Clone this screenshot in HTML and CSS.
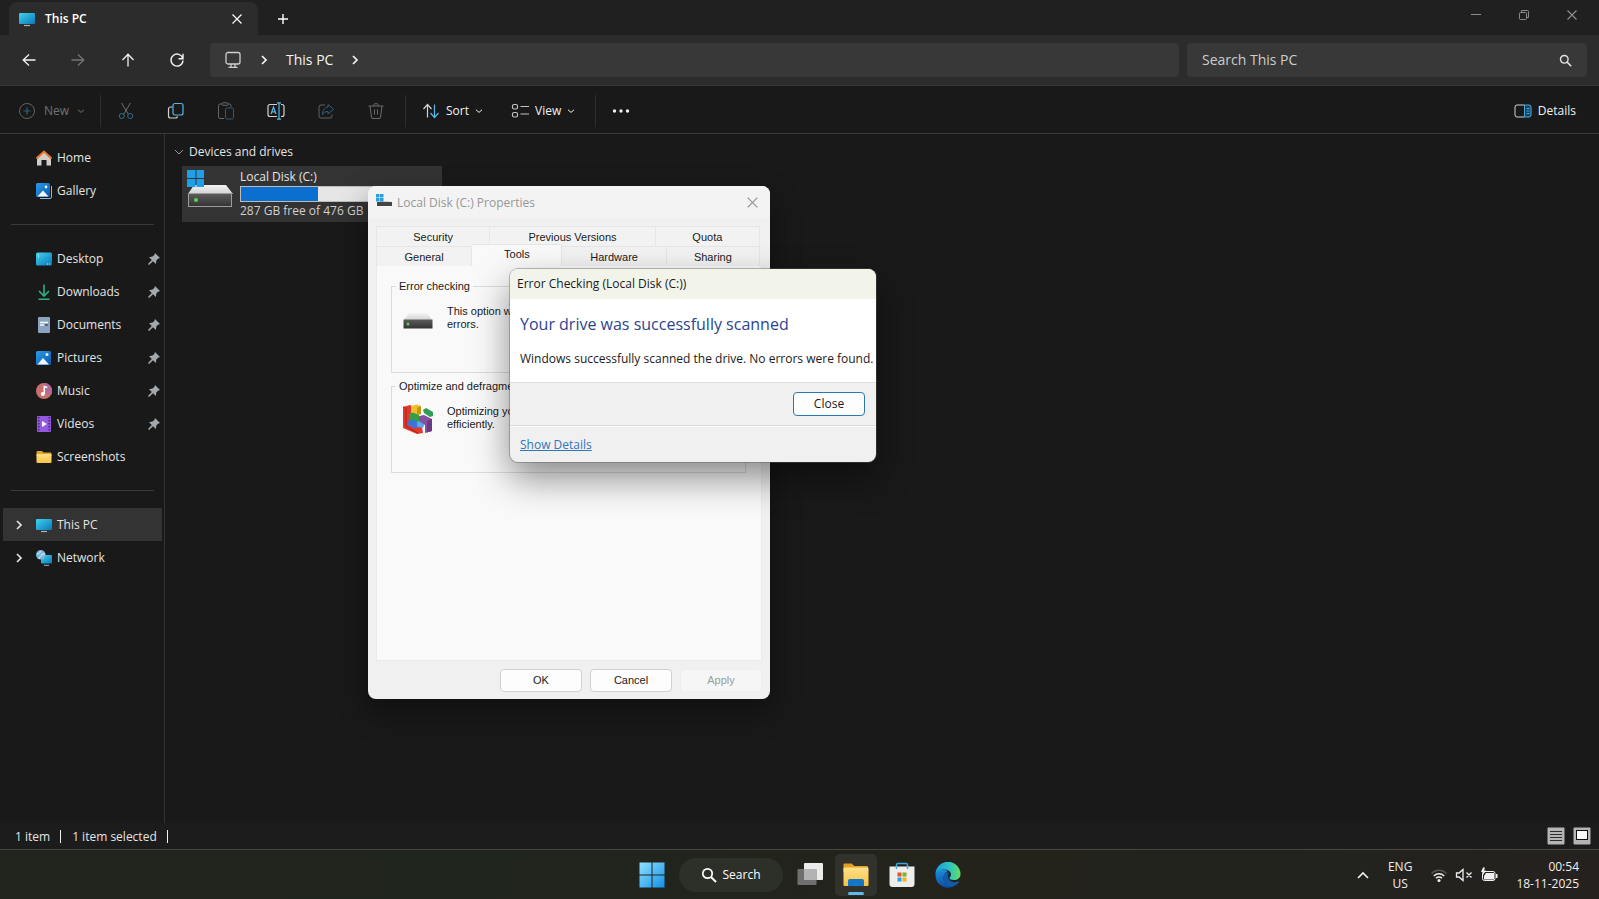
FILE: index.html
```html
<!DOCTYPE html>
<html lang="en">
<head>
  <meta charset="UTF-8">
  <title>This PC</title>
  <link rel="stylesheet" href="styles.css">
</head>
<body>
  <!-- shared icons -->
  <svg class="defs" width="0" height="0">
    <defs>
      <linearGradient id="screen" x1="0" y1="0" x2="1" y2="1">
        <stop offset="0" stop-color="#3fd3ee"/><stop offset="1" stop-color="#0a78b8"/>
      </linearGradient>
      <linearGradient id="blue" x1="0" y1="0" x2="1" y2="1">
        <stop offset="0" stop-color="#2a9be8"/><stop offset="1" stop-color="#0b58ae"/>
      </linearGradient>
      <linearGradient id="folder" x1="0" y1="0" x2="0" y2="1">
        <stop offset="0" stop-color="#ffe08a"/><stop offset="1" stop-color="#f8c243"/>
      </linearGradient>
      <linearGradient id="drivetop" x1="0" y1="0" x2="0" y2="1">
        <stop offset="0" stop-color="#f4f4f4"/><stop offset="1" stop-color="#d2d2d2"/>
      </linearGradient>
      <linearGradient id="drivebody" x1="0" y1="0" x2="0" y2="1">
        <stop offset="0" stop-color="#5c5c5c"/><stop offset="1" stop-color="#333"/>
      </linearGradient>
      <linearGradient id="start" x1="0" y1="0" x2="1" y2="1">
        <stop offset="0" stop-color="#8fe2ff"/><stop offset="1" stop-color="#1290e8"/>
      </linearGradient>
      <symbol id="pc" viewBox="0 0 16 16">
        <rect x="0" y="2" width="16" height="11" rx="1" fill="url(#screen)"/>
        <path d="M5 14.500h6" stroke="#a9b4bb" stroke-width="1.200"/>
      </symbol>
      <symbol id="picture" viewBox="0 0 16 16">
        <rect x="0" y="1" width="15" height="14" rx="1.500" fill="url(#blue)"/>
        <path d="M1.500 14.500L7 8l6 6.500z" fill="#eef8ff"/>
        <circle cx="11" cy="4.500" r="1.500" fill="#e6f5ff"/>
      </symbol>
      <symbol id="pin" viewBox="0 0 12 12">
        <path d="M7 0L12 5l-2 0.700-1.700 1.800-0.400 3.500L5 8.200 1 12 0 11 3.800 7 1 4.200l3.500-0.600L6.300 2z" fill="#a3a9ad"/>
      </symbol>
      <symbol id="down" viewBox="0 0 8 8">
        <path d="M1 2.800L4 5.400l3-2.600" fill="none" stroke="currentColor"/>
      </symbol>
      <symbol id="right" viewBox="0 0 8 12">
        <path d="M2 2l4 4-4 4" fill="none" stroke="currentColor" stroke-width="1.700"/>
      </symbol>
      <symbol id="close" viewBox="0 0 12 12">
        <path d="M1.500 1.500l9 9M10.500 1.500l-9 9" fill="none" stroke="currentColor" stroke-width="1.200"/>
      </symbol>
      <symbol id="search" viewBox="0 0 16 16">
        <circle cx="6.500" cy="6.500" r="4.700" fill="none" stroke="currentColor" stroke-width="1.700"/>
        <path d="M10 10l5 5" stroke="currentColor" stroke-width="1.900"/>
      </symbol>
      <symbol id="drive" viewBox="0 0 30 18">
        <path d="M6 1h18l5 7H1z" fill="url(#drivetop)"/>
        <rect x="0.500" y="7.500" width="29" height="9" fill="url(#drivebody)"/>
        <circle cx="5" cy="12" r="1.500" fill="#5ad15a"/>
      </symbol>
    </defs>
  </svg>

  <div class="desktop">
    <main class="explorer">
      <header class="titlebar">
        <div class="tab">
          <svg width="16" height="16"><use href="#pc"/></svg>
          <span class="tab-title">This PC</span>
          <button class="icon-btn tab-close" aria-label="Close tab"><svg width="12" height="12"><use href="#close"/></svg></button>
        </div>
        <button class="icon-btn new-tab" aria-label="New tab">
          <svg width="12" height="12" viewBox="0 0 12 12"><path d="M6 1v10M1 6h10" stroke="currentColor" stroke-width="1.400"/></svg>
        </button>
        <div class="window-controls">
          <button class="icon-btn" aria-label="Minimize"><svg width="12" height="12" viewBox="0 0 12 12"><path d="M1 5.500h10" stroke="currentColor"/></svg></button>
          <button class="icon-btn" aria-label="Restore"><svg width="12" height="12" viewBox="0 0 12 12" fill="none" stroke="currentColor"><rect x="1.500" y="3.500" width="7" height="7" rx="1"/><path d="M3.500 3V1.500h6a1 1 0 0 1 1 1v6H9"/></svg></button>
          <button class="icon-btn" aria-label="Close"><svg width="12" height="12"><use href="#close"/></svg></button>
        </div>
      </header>

      <nav class="address-row">
        <div class="nav-buttons">
          <button class="icon-btn" aria-label="Back"><svg width="16" height="16" viewBox="0 0 16 16" fill="none" stroke="currentColor" stroke-width="1.300"><path d="M14.500 8h-12M8 2.500L2.200 8 8 13.500"/></svg></button>
          <button class="icon-btn" aria-label="Forward" disabled><svg width="16" height="16" viewBox="0 0 16 16" fill="none" stroke="currentColor" stroke-width="1.300"><path d="M1.500 8h12M8 2.500L13.800 8 8 13.500"/></svg></button>
          <button class="icon-btn" aria-label="Up"><svg width="16" height="16" viewBox="0 0 16 16" fill="none" stroke="currentColor" stroke-width="1.300"><path d="M8 14.500v-12M2.500 8L8 2.200 13.500 8"/></svg></button>
          <button class="icon-btn" aria-label="Refresh"><svg width="16" height="16" viewBox="0 0 16 16" fill="none" stroke="currentColor" stroke-width="1.400"><path d="M13.800 6.500A6 6 0 1 0 14 8.500M14 1.800v5H9.500"/></svg></button>
        </div>
        <div class="address">
          <svg width="18" height="18" viewBox="0 0 18 18" fill="none" stroke="#cfcfcf" stroke-width="1.300"><rect x="2" y="1.500" width="14" height="11.500" rx="2"/><path d="M7 13v3M11 13v3M4.500 16.300h9"/></svg>
          <svg width="8" height="12"><use href="#right"/></svg>
          <button class="crumb">This PC</button>
          <svg width="8" height="12"><use href="#right"/></svg>
        </div>
        <div class="search-box">
          <input type="text" placeholder="Search This PC" aria-label="Search This PC">
          <svg width="13" height="13"><use href="#search"/></svg>
        </div>
      </nav>

      <div class="toolbar">
        <button class="tool new" disabled>
          <svg width="18" height="18" viewBox="0 0 18 18" fill="none"><circle cx="9" cy="9" r="7.500" stroke="#626262"/><path d="M9 5.500v7M5.500 9h7" stroke="#2f617c" stroke-width="1.200"/></svg>
          New <svg width="8" height="8"><use href="#down"/></svg>
        </button>
        <div class="tool-icons">
          <button class="icon-btn" aria-label="Cut" disabled><svg width="18" height="18" viewBox="0 0 18 18" fill="none"><path d="M4.500 1l7 11.500M13.500 1l-7 11.500" stroke="#6d6d6d"/><circle cx="4.800" cy="14" r="2.500" stroke="#356c8b"/><circle cx="13.200" cy="14" r="2.500" stroke="#356c8b"/></svg></button>
          <button class="icon-btn" aria-label="Copy"><svg width="18" height="18" viewBox="0 0 18 18" fill="none" stroke-width="1.200"><path d="M5.500 5H3.500a2 2 0 0 0-2 2v7a2 2 0 0 0 2 2h5a2 2 0 0 0 2-1.500" stroke="#d2d2d2"/><rect x="6" y="1.500" width="10" height="11.500" rx="2" stroke="#5ab5e6"/></svg></button>
          <button class="icon-btn" aria-label="Paste" disabled><svg width="18" height="18" viewBox="0 0 18 18" fill="none"><path d="M7 16.500H3a1.500 1.500 0 0 1-1.500-1.500V3.500A1.500 1.500 0 0 1 3 2h2M11 2h1.500A1.500 1.500 0 0 1 14 3.500V5" stroke="#666"/><rect x="5" y="0.800" width="6" height="2.500" rx="1" stroke="#666"/><rect x="8.500" y="6" width="8" height="11" rx="1.500" stroke="#2e5a73"/></svg></button>
          <button class="icon-btn" aria-label="Rename"><svg width="18" height="18" viewBox="0 0 18 18" fill="none" stroke-width="1.200"><path d="M10 2.500H3a2 2 0 0 0-2 2v8a2 2 0 0 0 2 2h7M14 2.500h1a2 2 0 0 1 2 2v8a2 2 0 0 1-2 2h-1" stroke="#d2d2d2"/><path d="M4 12l2.500-7L9 12M5 9.800h3M12 1v16M10 0.800h4M10 17.200h4" stroke="#5ab5e6"/></svg></button>
          <button class="icon-btn" aria-label="Share" disabled><svg width="18" height="18" viewBox="0 0 18 18" fill="none"><path d="M8 3H4a2 2 0 0 0-2 2v9a2 2 0 0 0 2 2h9a2 2 0 0 0 2-2v-1.500" stroke="#626262"/><path d="M11 2.500l5.500 4.800L11 12V9.500c-3 0-4.500 1-5.500 3 0-4 2-7 5.500-7.500z" stroke="#2f617c"/></svg></button>
          <button class="icon-btn" aria-label="Delete" disabled><svg width="18" height="18" viewBox="0 0 18 18" fill="none" stroke="#6a6a6a"><path d="M1.500 4h15M6.500 4a2.500 2.500 0 0 1 5 0M3 4l1.500 11a1.500 1.500 0 0 0 1.500 1.500h6a1.500 1.500 0 0 0 1.500-1.500L15 4M7.500 7.500v5M10.500 7.500v5"/></svg></button>
        </div>
        <button class="tool sort">
          <svg width="18" height="18" viewBox="0 0 18 18" fill="none" stroke-width="1.200"><path d="M5.500 15.500V3M1.500 7l4-4.500 4 4.500" stroke="#d2d2d2"/><path d="M12.500 2.500V15M8.500 11l4 4.500 4-4.500" stroke="#5ab5e6"/></svg>
          Sort <svg width="8" height="8"><use href="#down"/></svg>
        </button>
        <button class="tool view">
          <svg width="18" height="18" viewBox="0 0 18 18" fill="none" stroke="#c2c2c2" stroke-width="1.200"><rect x="1.500" y="2.500" width="5" height="4.500" rx="1.500"/><rect x="1.500" y="10.500" width="5" height="4.500" rx="1.500"/><path d="M9.500 4.500H18M9.500 12H18"/></svg>
          View <svg width="8" height="8"><use href="#down"/></svg>
        </button>
        <button class="icon-btn more" aria-label="See more"><svg width="18" height="6" viewBox="0 0 18 6" fill="currentColor"><circle cx="2.500" cy="3" r="1.700"/><circle cx="9" cy="3" r="1.700"/><circle cx="15.500" cy="3" r="1.700"/></svg></button>
        <button class="tool details">
          <svg width="18" height="18" viewBox="0 0 18 18" fill="none"><rect x="10.500" y="3" width="7" height="12" rx="2" fill="#12435f"/><path d="M10.500 3H3a2 2 0 0 0-2 2v8a2 2 0 0 0 2 2h7.500" stroke="#d2d2d2"/><path d="M10.500 3v12H15a2 2 0 0 0 2-2V5a2 2 0 0 0-2-2zM12.500 6.500h3M12.500 9h3M12.500 11.500h3" stroke="#4aa8dc"/></svg>
          Details
        </button>
      </div>

      <div class="content">
        <aside class="sidebar">
          <a class="side-item" href="#">
            <svg width="16" height="16" viewBox="0 0 16 16"><path d="M1 8l7-6.500L15 8v7.500h-4.500V10h-5v5.500H1z" fill="#d0cdca"/><path d="M0.500 8.500L8 1.500l7.500 7" fill="none" stroke="#e2792c" stroke-width="2"/></svg>
            Home</a>
          <a class="side-item" href="#">
            <svg width="16" height="16" viewBox="0 0 16 16"><path d="M4 15.500h10a1.500 1.500 0 0 0 1.500-1.500V3" fill="none" stroke="#8ab9dd"/><rect width="14" height="14" rx="1.500" fill="url(#blue)"/><path d="M1.500 13.500L7 7.500l5.500 6z" fill="#eef8ff"/><circle cx="10" cy="4" r="1.400" fill="#e6f5ff"/></svg>
            Gallery</a>
          <hr>
          <a class="side-item" href="#">
            <svg width="16" height="16" viewBox="0 0 16 16"><rect y="1.500" width="16" height="13" rx="1.500" fill="url(#screen)"/><path d="M2 4h1M2 6h1M11 13h1M13 13h1" stroke="#d9f6ff"/></svg>
            Desktop <svg class="pin" width="12" height="12"><use href="#pin"/></svg></a>
          <a class="side-item" href="#">
            <svg width="16" height="16" viewBox="0 0 16 16" fill="none" stroke="#2fae86" stroke-width="1.600"><path d="M8 0.500v11M3 7l5 5 5-5M2.500 15.200h11"/></svg>
            Downloads <svg class="pin" width="12" height="12"><use href="#pin"/></svg></a>
          <a class="side-item" href="#">
            <svg width="16" height="16" viewBox="0 0 16 16"><rect x="2" width="12" height="16" rx="1" fill="#8ba3bd"/><path d="M4 5.500h8M4 8h4" stroke="#f4f8fc" stroke-width="1.400"/><path d="M9 8h3" stroke="#39506a" stroke-width="1.400"/></svg>
            Documents <svg class="pin" width="12" height="12"><use href="#pin"/></svg></a>
          <a class="side-item" href="#">
            <svg width="16" height="16"><use href="#picture"/></svg>
            Pictures <svg class="pin" width="12" height="12"><use href="#pin"/></svg></a>
          <a class="side-item" href="#">
            <svg width="16" height="16" viewBox="0 0 16 16"><circle cx="8" cy="8" r="8" fill="#c9706c"/><path d="M8 0a8 8 0 0 1 7 12L8 8z" fill="#b06a96"/><path d="M8.300 11V3.500l3 1" fill="none" stroke="#fff" stroke-width="1.500"/><circle cx="6.800" cy="11" r="2" fill="#fff"/></svg>
            Music <svg class="pin" width="12" height="12"><use href="#pin"/></svg></a>
          <a class="side-item" href="#">
            <svg width="16" height="16" viewBox="0 0 16 16"><rect x="1" width="14" height="16" rx="1" fill="#9358dc"/><path d="M2.800 1v14M13.200 1v14" stroke="#4b2387" stroke-width="1.500" stroke-dasharray="1.500 1.500"/><path d="M6 5l5 3-5 3z" fill="#fff"/></svg>
            Videos <svg class="pin" width="12" height="12"><use href="#pin"/></svg></a>
          <a class="side-item" href="#">
            <svg width="16" height="16" viewBox="0 0 16 16"><path d="M0.500 3a1 1 0 0 1 1-1H6l1.500 1.500h7a1 1 0 0 1 1 1V7h-15z" fill="#e0a42c"/><rect x="0.500" y="5" width="15" height="9" rx="1" fill="url(#folder)"/></svg>
            Screenshots</a>
          <hr>
          <a class="side-item expandable selected" href="#">
            <svg width="8" height="12"><use href="#right"/></svg>
            <svg width="16" height="16"><use href="#pc"/></svg>
            This PC</a>
          <a class="side-item expandable" href="#">
            <svg width="8" height="12"><use href="#right"/></svg>
            <svg width="16" height="16" viewBox="0 0 16 16"><rect x="5" y="5" width="11" height="8.500" rx="0.800" fill="url(#screen)"/><path d="M8 15.300h5" stroke="#a9b4bb"/><circle cx="4.800" cy="4.800" r="4.800" fill="#79b8dc"/><path d="M1 4c2 0 3-1 3.500-3M3 9c0-3 3-2 3-5h3" fill="none" stroke="#e0f1fa"/></svg>
            Network</a>
        </aside>

        <section class="files">
          <h2 class="group-title"><svg width="12" height="12" viewBox="0 0 12 12"><path d="M2 4l4 4 4-4" fill="none" stroke="#9a9a9a"/></svg>Devices and drives</h2>
          <div class="drive-tile">
            <svg width="48" height="40" viewBox="0 0 48 40">
              <path d="M8 16h32l7 9H2z" fill="url(#drivetop)"/>
              <rect x="2.500" y="24.500" width="43" height="13" fill="url(#drivebody)" stroke="#9d9d9d"/>
              <circle cx="10" cy="31" r="2" fill="#55d655"/>
              <path d="M1 1h8.500v8H1zM10.500 1H18v8H10.500zM1 10h8.500v8H1zM10.500 10H18v8H10.500z" fill="#1e9fe8"/>
            </svg>
            <div class="drive-info">
              <span>Local Disk (C:)</span>
              <div class="usage"><div class="used" style="width: 40%"></div></div>
              <span class="free">287 GB free of 476 GB</span>
            </div>
          </div>
        </section>
      </div>

      <footer class="status">
        <span class="count">1 item</span>
        <span class="count">1 item selected</span>
        <div class="layouts">
          <button class="icon-btn" aria-label="Details view"><svg width="18" height="18" viewBox="0 0 18 18"><rect x="0.500" y="0.500" width="17" height="17" rx="1" fill="#b4b4b4"/><path d="M3 4.500h12M3 7.500h12M3 10.500h12M3 13.500h12" stroke="#2b2b2b"/></svg></button>
          <button class="icon-btn" aria-label="Large icons view"><svg width="18" height="18" viewBox="0 0 18 18"><rect x="0.500" y="0.500" width="17" height="17" rx="1" fill="#b4b4b4"/><rect x="3.500" y="3.500" width="11" height="9" fill="#fff" stroke="#111"/></svg></button>
        </div>
      </footer>
    </main>

    <footer class="taskbar">
      <div class="task-apps">
        <button class="task-btn" aria-label="Start"><svg width="26" height="26" viewBox="0 0 26 26"><path d="M0.500 0.500h12v12h-12zM13.500 0.500h12v12h-12zM0.500 13.500h12v12h-12zM13.500 13.500h12v12h-12z" fill="url(#start)"/></svg></button>
        <button class="task-search"><svg width="16" height="16"><use href="#search"/></svg>Search</button>
        <button class="task-btn" aria-label="Task view"><svg width="26" height="26" viewBox="0 0 26 26"><rect x="7" y="1" width="19" height="17" rx="1" fill="#ececec"/><rect x="0.500" y="7" width="19" height="16" rx="1" fill="#6f6f6f"/><path d="M7 7h12.500v11H7z" fill="#b3b3b3"/></svg></button>
        <button class="task-btn active" aria-label="File Explorer"><svg width="26" height="26" viewBox="0 0 26 26"><path d="M0.500 2.500a1 1 0 0 1 1-1h7l3 2.500H24a1 1 0 0 1 1 1v5H0.500z" fill="#e3a022"/><rect x="0.500" y="5.500" width="25" height="18.500" rx="1" fill="url(#folder)"/><path d="M5 24v-5a2 2 0 0 1 2-2h12a2 2 0 0 1 2 2V24z" fill="#1476c6"/></svg></button>
        <button class="task-btn" aria-label="Microsoft Store"><svg width="26" height="26" viewBox="0 0 26 26"><path d="M7.500 6V3a1.500 1.500 0 0 1 1.500-1.500h8A1.500 1.500 0 0 1 18.500 3v3" fill="none" stroke="#35a9e0" stroke-width="1.500"/><path d="M0.500 4.500h25V22a3 3 0 0 1-3 3h-19a3 3 0 0 1-3-3z" fill="#ededed"/><path d="M7.500 4.500V7M18.500 4.500V7" stroke="#35a9e0" stroke-width="1.500"/><path d="M8.500 10.500h4v4h-4z" fill="#e2502f"/><path d="M13.500 10.500h4v4h-4z" fill="#7bb526"/><path d="M8.500 15.500h4v4h-4z" fill="#2a9fe0"/><path d="M13.500 15.500h4v4h-4z" fill="#f2b51d"/></svg></button>
        <button class="task-btn" aria-label="Microsoft Edge">
          <svg width="26" height="26" viewBox="0 0 26 26">
            <defs>
              <linearGradient id="wave" x1="0" y1="0" x2="1" y2="0"><stop offset="0" stop-color="#1b9be0"/><stop offset="0.550" stop-color="#2cc3c6"/><stop offset="1" stop-color="#67df5b"/></linearGradient>
              <linearGradient id="sea" x1="0" y1="0" x2="0" y2="1"><stop offset="0" stop-color="#1c8ede"/><stop offset="1" stop-color="#0d4c9f"/></linearGradient>
            </defs>
            <path d="M0.500 13A12.500 12.500 0 0 0 20 23.500C14 26 8 21 8.500 15.500 9 11 13 9 13 9 7 6 1 8 0.500 13z" fill="url(#sea)"/>
            <path d="M0.500 12.500A12.500 12.500 0 0 1 25.500 12c0 4-3 6-6.500 6-3 0-4.500-1-4.500-2s1.500-1.500 1.500-3.500c0-3-3-5-7-5-4.500 0-7.500 2-8.500 5z" fill="url(#wave)"/>
            <path d="M8.600 14c-1.500 7 4 12.500 11.400 9.500 2-1 3.500-2.500 4.500-4.500-5 2.500-11 1-11.500-5 0-1.500 1-3 1-3-2.500-1.500-5-0.500-5.400 3z" fill="#135aa9"/>
          </svg>
        </button>
      </div>
      <div class="tray">
        <button class="icon-btn" aria-label="Show hidden icons"><svg width="14" height="10" viewBox="0 0 14 10"><path d="M2 8l5-5 5 5" fill="none" stroke="#f0f0f0" stroke-width="1.600"/></svg></button>
        <span class="lang">ENG<br>US</span>
        <div class="tray-icons">
          <svg width="18" height="16" viewBox="0 0 18 16" fill="none" stroke-width="1.500"><path d="M1.500 6.500a10.500 10.500 0 0 1 15 0" stroke="#55574f"/><path d="M3.800 9a7.300 7.300 0 0 1 10.400 0M6 11.300a4.200 4.200 0 0 1 6 0" stroke="#f0f0f0"/><circle cx="9" cy="13.500" r="1.500" fill="#f0f0f0"/></svg>
          <svg width="18" height="16" viewBox="0 0 18 16" fill="none" stroke="#f0f0f0" stroke-width="1.300"><path d="M1.500 6v4h2.500l4 3.500v-11L4 6zM11.500 5.500l5 5M16.500 5.500l-5 5"/></svg>
          <svg width="18" height="16" viewBox="0 0 18 16"><rect x="2.500" y="4.500" width="12.500" height="9" rx="2" fill="none" stroke="#f0f0f0"/><path d="M6 6h8v6.500H4V9zM16 7h1.500v4H16zM3 0.500L1 5h2v3l3-4.500H4l1-3z" fill="#f0f0f0"/></svg>
        </div>
        <span class="clock">00:54<br>18-11-2025</span>
      </div>
    </footer>

    <div class="window properties" role="dialog" aria-label="Local Disk (C:) Properties">
      <div class="prop-title">
        <svg width="16" height="16" viewBox="0 0 16 16"><path d="M3 7h10l2 2H2z" fill="#cfcfcf"/><rect x="1" y="8" width="15" height="4" fill="#444"/><path d="M0 0h3.500v3.500H0zM4 0h3.500v3.500H4zM0 4h3.500v3.500H0zM4 4h3.500v3.500H4z" fill="#2a9fe0"/></svg>
        <span>Local Disk (C:) Properties</span>
        <button class="icon-btn" aria-label="Close"><svg width="13" height="13"><use href="#close"/></svg></button>
      </div>
      <div class="tabs">
        <div class="tab-row upper">
          <button>Security</button>
          <button>Previous Versions</button>
          <button>Quota</button>
        </div>
        <div class="tab-row lower">
          <button>General</button>
          <button class="current">Tools</button>
          <button>Hardware</button>
          <button>Sharing</button>
        </div>
      </div>
      <div class="panel">
        <fieldset>
          <legend>Error checking</legend>
          <svg width="30" height="30" viewBox="0 0 30 30"><use href="#drive" y="8" width="30" height="18"/></svg>
          <p>This option will check the drive for file system<br>errors.</p>
        </fieldset>
        <fieldset>
          <legend>Optimize and defragment drive</legend>
          <svg width="30" height="30" viewBox="0 0 30 30">
            <path d="M0 3l7-2 2 1v15l10 6 1 6-6 1L0 24z" fill="#e2382c"/>
            <path d="M0 3l3 1.500v18L15 29" fill="none" stroke="#a81f1b"/>
            <path d="M8 2l6-1.500 4 1.500v8l-5 1-5-2z" fill="#eec22c"/>
            <path d="M14 3.500l4-1.500v8l-4 1z" fill="#c99412"/>
            <path d="M6 10l4-1.500 6 2.500v7l-4 1-6-3z" fill="#33a047"/>
            <path d="M5 17l5-1.500 4 2v6l-3 1-6-3.500z" fill="#3d72d8"/>
            <path d="M14 18l5-2 3 3-2 5-6-1z" fill="#58a8f0"/>
            <path d="M16 12l5-1 8 4v12l-7 2v-8l-6-4z" fill="#87509f"/>
            <path d="M24 17l5-2v12l-5 1.500z" fill="#6a3a82"/>
            <path d="M20 6l3-2 7 4v4l-3 1-6-4z" fill="#2f9e55"/>
          </svg>
          <p>Optimizing your computer's drives can help it run more<br>efficiently.</p>
        </fieldset>
      </div>
      <div class="prop-actions">
        <button>OK</button>
        <button>Cancel</button>
        <button disabled>Apply</button>
      </div>
    </div>

    <div class="window result" role="dialog" aria-label="Error Checking (Local Disk (C:))">
      <div class="result-title">Error Checking (Local Disk (C:))</div>
      <div class="result-body">
        <h1>Your drive was successfully scanned</h1>
        <p>Windows successfully scanned the drive. No errors were found.</p>
      </div>
      <div class="result-actions"><button>Close</button></div>
      <div class="result-more"><a href="#">Show Details</a></div>
    </div>
  </div>
</body>
</html>
```
FILE: styles.css
```css
* {
  box-sizing: border-box;
}

body {
  margin: 0;
  background: #191919;
  color: #e4e4e4;
  font-family: 'Segoe UI', 'Open Sans', sans-serif;
  font-size: 12px;
  line-height: 16px;
}

button,
input {
  font: inherit;
  color: inherit;
  border: none;
  background: none;
  padding: 0;
  margin: 0;
}

svg {
  display: block;
  flex: none;
}

.defs {
  position: absolute;
}

.desktop {
  position: relative;
  display: flex;
  flex-direction: column;
  height: 100vh;
  overflow: hidden;
}

.explorer {
  flex: 1;
  min-height: 0;
  display: flex;
  flex-direction: column;
}

.icon-btn {
  display: flex;
  align-items: center;
  justify-content: center;
}

/* title bar */
.titlebar {
  display: flex;
  height: 35px;
  background: #202020;
  padding-left: 9px;
}

.tab {
  display: flex;
  align-items: center;
  width: 249px;
  margin-top: 2px;
  padding: 0 15px 0 10px;
  gap: 10px;
  background: #2c2c2c;
  border-radius: 8px 8px 0 0;
  color: #fff;
  font-weight: 600;
}

.tab-close {
  margin-left: auto;
}

.new-tab {
  width: 50px;
  padding-top: 2px;
  color: #fff;
}

.window-controls {
  display: flex;
  margin-left: auto;
  padding-right: 3px;
  height: 30px;
  color: #8c8c8c;
}

.window-controls .icon-btn {
  width: 48px;
}

/* address row */
.address-row {
  display: flex;
  align-items: center;
  gap: 8px;
  height: 51px;
  padding: 0 12px 0 4px;
  background: #2c2c2c;
  border-bottom: 1px solid #353535;
}

.nav-buttons {
  display: flex;
  width: 198px;
  color: #f2f2f2;
}

.nav-buttons .icon-btn {
  width: 50px;
  height: 34px;
}

.nav-buttons .icon-btn:disabled {
  color: #747474;
}

.address,
.search-box {
  display: flex;
  align-items: center;
  height: 34px;
  background: #383838;
  border-radius: 4px;
  font-size: 14px;
}

.address {
  flex: 1;
  gap: 18px;
  padding: 0 14px;
  color: #f5f5f5;
}

.search-box {
  width: 400px;
  padding: 0 15px;
}

.search-box input {
  flex: 1;
  outline: none;
}

.search-box input::placeholder {
  color: #cdcdcd;
  opacity: 1;
}

/* command bar */
.toolbar {
  display: flex;
  align-items: center;
  height: 48px;
  padding: 2px 23px 0 18px;
  border-bottom: 1px solid #3a3a3a;
  color: #f0f0f0;
}

.tool {
  display: flex;
  align-items: center;
  gap: 6px;
}

.new {
  width: 82px;
  gap: 8px;
  color: #727272;
}

.tool-icons {
  display: flex;
  align-items: center;
  height: 32px;
  padding-right: 4px;
  border-left: 1px solid #2d2d2d;
  border-right: 1px solid #2d2d2d;
}

.tool-icons .icon-btn {
  width: 50px;
}

.sort {
  padding: 0 14px 0 16px;
}

.view {
  padding: 0 20px 0 14px;
}

.more {
  height: 32px;
  padding-left: 16px;
  border-left: 1px solid #2d2d2d;
}

.details {
  margin-left: auto;
}

/* body of the window */
.content {
  flex: 1;
  min-height: 0;
  display: flex;
}

.sidebar {
  width: 165px;
  padding: 7px 2px 0 3px;
  border-right: 1px solid #333;
}

.side-item {
  display: flex;
  align-items: center;
  gap: 5px;
  height: 33px;
  padding: 0 2px 0 33px;
  color: #e4e4e4;
  text-decoration: none;
}

.side-item .pin {
  margin-left: auto;
}

.expandable {
  padding-left: 12px;
}

.expandable svg:first-child {
  margin-right: 8px;
}

.selected {
  background: #333;
}

.sidebar hr {
  margin: 17px 8px;
  border: none;
  border-top: 1px solid #3a3a3a;
}

.files {
  flex: 1;
  padding: 10px 8px;
}

.group-title {
  display: flex;
  align-items: center;
  gap: 4px;
  margin: 0 0 6px;
  font-size: 12px;
  font-weight: 400;
}

.drive-tile {
  display: flex;
  gap: 6px;
  width: 260px;
  margin-left: 9px;
  padding: 3px 4px;
  background: #333;
}

.drive-info {
  flex: 1;
  padding-right: 4px;
}

.drive-info span {
  display: block;
}

.free {
  color: #cfcfcf;
}

.usage {
  height: 16px;
  margin: 1px 0;
  background: #e6e6e6;
  border: 1px solid #bcbcbc;
}

.used {
  height: 100%;
  background: #0a6fce;
}

.status {
  display: flex;
  align-items: center;
  height: 26px;
  padding: 0 8px 0 15px;
  background: #1c1c1c;
}

.count {
  padding-right: 10px;
  margin-right: 11px;
  line-height: 13px;
  border-right: 1px solid #f2f2f2;
}

.layouts {
  display: flex;
  gap: 8px;
  margin-left: auto;
}

/* taskbar */
.taskbar {
  display: flex;
  align-items: center;
  justify-content: center;
  height: 50px;
  border-top: 1px solid #47473f;
  background: linear-gradient(90deg, #22251d, #20251e 30%, #23231b 60%, #22221e 85%, #25211e);
}

.task-apps {
  display: flex;
  align-items: center;
  gap: 4px;
}

.task-btn {
  display: flex;
  align-items: center;
  justify-content: center;
  width: 42px;
  height: 42px;
  border-radius: 5px;
}

.task-search {
  display: flex;
  align-items: center;
  justify-content: center;
  gap: 6px;
  width: 104px;
  height: 34px;
  border-radius: 17px;
  background: #2d3029;
  color: #fff;
  margin: 0 2px;
}

.active {
  position: relative;
  background: #31322b;
}

.active::after {
  content: '';
  position: absolute;
  left: 13px;
  bottom: 1px;
  width: 16px;
  height: 3px;
  border-radius: 2px;
  background: #5fb8e8;
}

.tray {
  position: absolute;
  right: 20px;
  display: flex;
  align-items: center;
  gap: 18px;
  line-height: 17px;
  color: #f0f0f0;
}

.lang {
  text-align: center;
}

.tray-icons {
  display: flex;
  gap: 7px;
}

.clock {
  text-align: right;
}

/* dialogs */
.window {
  position: absolute;
  border-radius: 8px;
  color: #1a1a1a;
  overflow: hidden;
}

.properties {
  left: 368px;
  top: 186px;
  width: 402px;
  padding: 0 8px 7px;
  background: #f0f0f0;
  box-shadow: 0 12px 30px rgba(0, 0, 0, 0.4);
  font-family: 'Liberation Sans', Arial, sans-serif;
  font-size: 11px;
  line-height: 13px;
}

.prop-title {
  display: flex;
  align-items: center;
  gap: 5px;
  height: 32px;
  margin: 0 -8px 8px;
  padding: 0 11px 0 8px;
  background: #f3f3f3;
  color: #979797;
  font-family: 'Segoe UI', 'Open Sans', sans-serif;
  font-size: 12px;
}

.prop-title .icon-btn {
  margin-left: auto;
}

.tabs {
  padding-right: 2px;
}

.tab-row {
  display: grid;
  height: 20px;
}

.upper {
  grid-template-columns: 114fr 165fr 104fr;
}

.lower {
  grid-template-columns: 96fr 90fr 104fr 93fr;
}

.tab-row button {
  padding-top: 2px;
  border: 1px solid #e6e6e6;
  border-width: 1px 1px 0 0;
  background: #f2f2f2;
}

.tab-row button:first-child {
  border-left-width: 1px;
}

.tab-row .current {
  margin-top: -2px;
  padding: 0 0 2px;
  background: #f9f9f9;
}

.panel {
  display: flex;
  flex-direction: column;
  gap: 7px;
  height: 395px;
  padding: 14px 15px 14px 14px;
  background: #f9f9f9;
  border: 1px solid #ebebeb;
  border-top: none;
}

fieldset {
  display: flex;
  gap: 14px;
  height: 93px;
  min-width: 0;
  margin: 0;
  padding: 11px 10px 0 11px;
  border: 1px solid #dcdcdc;
}

legend {
  margin-left: -7px;
  padding: 0 3px;
}

fieldset p {
  margin: 0;
  padding-top: 1px;
  white-space: nowrap;
}

.prop-actions {
  display: flex;
  justify-content: flex-end;
  gap: 8px;
  padding-top: 8px;
}

.prop-actions button {
  width: 82px;
  height: 23px;
  background: #fdfdfd;
  border: 1px solid #d0d0d0;
  border-radius: 4px;
}

.prop-actions button:disabled {
  color: #9c9c9c;
  background: #f6f6f6;
  border-color: #eee;
}

.result {
  left: 510px;
  top: 269px;
  width: 366px;
  background: #f0f0f0;
  box-shadow: 0 0 0 1px rgba(90, 90, 90, 0.4), 0 16px 36px rgba(0, 0, 0, 0.45);
}

.result-title {
  padding: 7px;
  background: #f2f4ea;
}

.result-body {
  padding: 14px 10px 15px;
  background: #fff;
  border-bottom: 1px solid #dfdfdf;
}

.result-body h1 {
  margin: 0 0 16px;
  font-size: 16px;
  font-weight: 400;
  line-height: 22px;
  color: #2b4590;
}

.result-body p {
  margin: 0;
  white-space: nowrap;
}

.result-actions {
  display: flex;
  justify-content: flex-end;
  padding: 9px 11px;
  border-bottom: 1px solid #dcdcdc;
}

.result-actions button {
  width: 72px;
  height: 24px;
  background: #fdfdfd;
  border: 1px solid #2a77b5;
  border-radius: 4px;
}

.result-more {
  padding: 10px 10px 9px;
  border-top: 1px solid #fafafa;
}

.result-more a {
  color: #2f76bd;
}
```
